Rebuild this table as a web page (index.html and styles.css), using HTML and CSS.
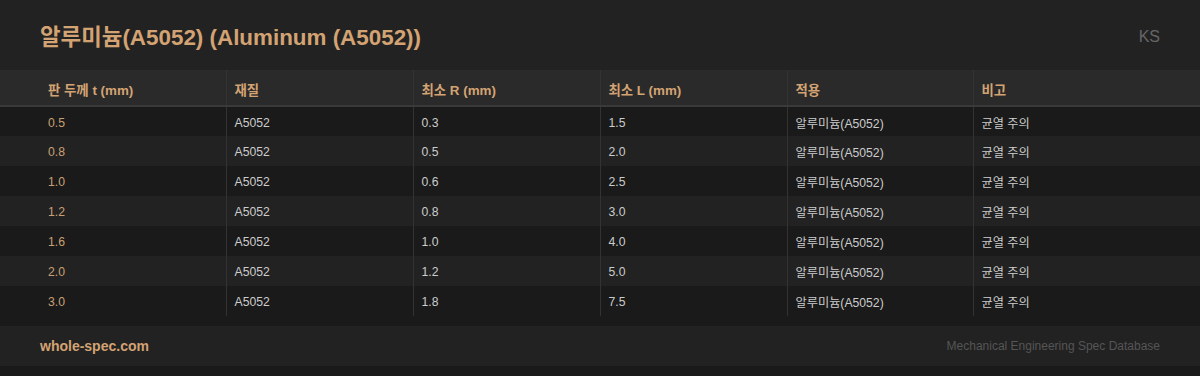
FILE: index.html
```html
<!DOCTYPE html>
<html lang="ko">
<head>
<meta charset="utf-8">
<link rel="stylesheet" href="styles.css">
</head>
<body>
<div class="page">
  <header class="top">
    <h1 class="title">알루미늄(A5052) (Aluminum (A5052))</h1>
    <span class="std">KS</span>
  </header>
  <table class="spec">
    <colgroup>
      <col class="c1"><col class="c2"><col class="c3"><col class="c4"><col class="c5"><col class="c6">
    </colgroup>
    <thead>
      <tr><th>판 두께 t (mm)</th><th>재질</th><th>최소 R (mm)</th><th>최소 L (mm)</th><th>적용</th><th>비고</th></tr>
    </thead>
    <tbody>
      <tr><td>0.5</td><td>A5052</td><td>0.3</td><td>1.5</td><td>알루미늄(A5052)</td><td>균열 주의</td></tr>
      <tr><td>0.8</td><td>A5052</td><td>0.5</td><td>2.0</td><td>알루미늄(A5052)</td><td>균열 주의</td></tr>
      <tr><td>1.0</td><td>A5052</td><td>0.6</td><td>2.5</td><td>알루미늄(A5052)</td><td>균열 주의</td></tr>
      <tr><td>1.2</td><td>A5052</td><td>0.8</td><td>3.0</td><td>알루미늄(A5052)</td><td>균열 주의</td></tr>
      <tr><td>1.6</td><td>A5052</td><td>1.0</td><td>4.0</td><td>알루미늄(A5052)</td><td>균열 주의</td></tr>
      <tr><td>2.0</td><td>A5052</td><td>1.2</td><td>5.0</td><td>알루미늄(A5052)</td><td>균열 주의</td></tr>
      <tr><td>3.0</td><td>A5052</td><td>1.8</td><td>7.5</td><td>알루미늄(A5052)</td><td>균열 주의</td></tr>
    </tbody>
  </table>
  <footer class="foot">
    <span class="brand">whole-spec.com</span>
    <span class="tag">Mechanical Engineering Spec Database</span>
  </footer>
</div>
</body>
</html>
```

FILE: styles.css
```css
* { box-sizing: border-box; }
html, body { margin: 0; padding: 0; }
body {
  background: #1a1a1a;
  font-family: "Liberation Sans", "Noto Sans CJK KR", sans-serif;
  color: #cccccc;
  width: 1200px;
  height: 376px;
  overflow: hidden;
}
.page { display: flex; flex-direction: column; }
.top {
  height: 70px;
  background: #222222;
  display: flex;
  align-items: center;
  justify-content: space-between;
  padding: 0 40px;
}
.title {
  margin: 0;
  font-size: 22.4px;
  font-weight: 700;
  color: #d4a373;
}
.std {
  font-size: 16px;
  color: #666666;
  position: relative;
  top: 2px;
}
.spec {
  width: 1200px;
  border-collapse: collapse;
  table-layout: fixed;
  font-size: 12.2px;
}
.c1 { width: 226px; }
.c2, .c3, .c4 { width: 187px; }
.c5 { width: 186px; }
.c6 { width: 227px; }
.spec th {
  height: 36px;
  background: #2a2a2a;
  color: #d4a373;
  font-size: 13.4px;
  font-weight: 700;
  text-align: left;
  padding: 2px 8px 0;
  border-bottom: 2px solid #3a3a3a;
  border-left: 1px solid #333333;
}
.spec td {
  height: 30px;
  padding: 2px 8px 0;
  border-left: 1px solid #333333;
  color: #cccccc;
}
.spec th:first-child, .spec td:first-child {
  border-left: none;
  padding-left: 48px;
}
.spec td:first-child { color: #c9a074; }
.spec tbody tr:nth-child(odd) { background: #1a1a1a; }
.spec tbody tr:nth-child(even) { background: #222222; }
.foot {
  margin-top: 10px;
  height: 40px;
  background: #222222;
  display: flex;
  align-items: center;
  justify-content: space-between;
  padding: 0 40px;
}
.brand {
  font-size: 14px;
  font-weight: 700;
  color: #d4a373;
}
.tag {
  font-size: 12px;
  color: #555555;
}
```
